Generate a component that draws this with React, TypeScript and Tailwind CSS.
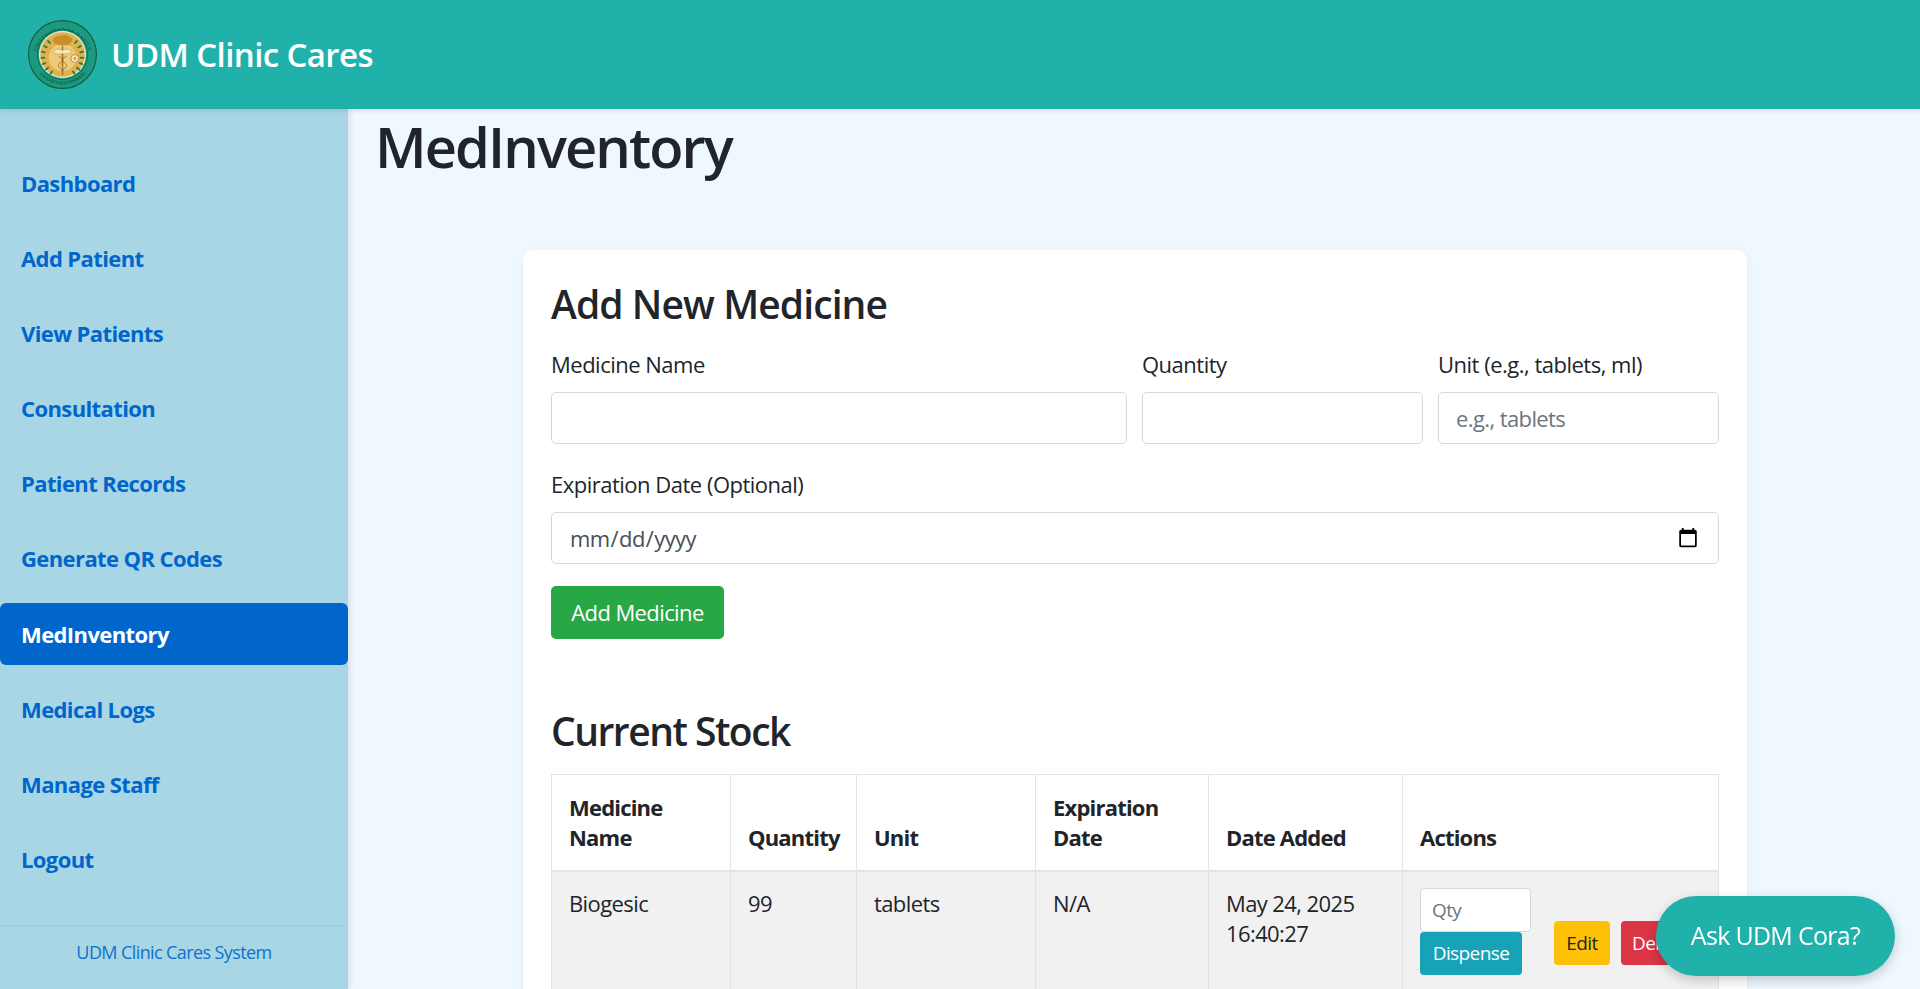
const navItems = [
  'Dashboard',
  'Add Patient',
  'View Patients',
  'Consultation',
  'Patient Records',
  'Generate QR Codes',
  'MedInventory',
  'Medical Logs',
  'Manage Staff',
  'Logout',
]

const inputClass =
  'h-[52px] w-full rounded-[5px] border border-[#d3d8de] bg-white px-[17px] text-[22px] outline-none placeholder:text-[#6c757d]'
const labelClass = 'mb-[13px] block h-[30px] text-[22px] leading-[30px] tracking-[-0.5px]'
const cellClass = 'border border-[#e1e4e8] px-[17px] pt-[16px] align-top'

function ClinicSeal() {
  const leaves = [0, 1, 2, 3, 4, 5, 6]
  return (
    <svg viewBox="0 0 70 70" className="h-[69px] w-[69px] shrink-0">
      <circle cx="35" cy="35" r="34.4" fill="#1b9a80" stroke="#14603f" strokeWidth="1.2" />
      <circle cx="35" cy="35" r="25.4" fill="none" stroke="#14603f" strokeWidth="0.8" />
      <defs>
        <path id="sealTop" d="M7.5 37a27.6 27.6 0 0 1 55 0" />
        <path id="sealBottom" d="M4.6 35a30.4 30.4 0 0 0 60.8 0" />
      </defs>
      <text fontSize="5" fill="#0f4a34" fontFamily="'Liberation Serif',serif" letterSpacing="0.35">
        <textPath href="#sealTop" startOffset="50%" textAnchor="middle">UNIVERSIDAD DE MANILA</textPath>
      </text>
      <text fontSize="4.6" fill="#0f4a34" fontFamily="'Liberation Serif',serif">
        <textPath href="#sealBottom" startOffset="50%" textAnchor="middle">UNIVERSITY HEALTH SERVICES</textPath>
      </text>
      <circle cx="35" cy="35" r="24" fill="#d9e8c9" />
      <circle cx="35" cy="35" r="22.6" fill="#e3b04e" />
      <circle cx="35" cy="38" r="14" fill="#efca7a" />
      {/* tree */}
      <path d="M25 21c2-5 6-6 9-5 3-2 7-1 9 2 3 0 3 4 0 5-1 3-5 3-7 2l-1 3-1-3c-3 1-7 0-9-4z" fill="#c98f2c" />
      {/* caduceus */}
      <path d="M35 27v29" stroke="#a8782c" strokeWidth="1.6" />
      <path d="M25 32c4-3 7-3 10-1 3-2 6-2 10 1-4 3-7 3-10 2-3 1-6 1-10-2z" fill="#f6e7bf" stroke="#b98a38" strokeWidth="0.5" />
      <path d="M31 37c5 2 5 4 4 5s-5 2-4 5 5 3 5 5M39 37c-5 2-5 4-4 5s5 2 4 5-5 3-5 5" fill="none" stroke="#8e6a2a" strokeWidth="0.8" />
      <circle cx="47.5" cy="39" r="4" fill="#f6e7bf" stroke="#a8782c" strokeWidth="0.8" />
      <circle cx="47.5" cy="39" r="1.6" fill="#d9a441" />
      {/* laurel */}
      {leaves.map((i) => {
        const a = ((i * 17 + 125) * Math.PI) / 180
        const b = ((55 - i * 17) * Math.PI) / 180
        const r = 20
        return (
          <g key={i} fill="#2f7a45">
            <ellipse cx={35 + r * Math.cos(a)} cy={37 + r * Math.sin(a)} rx="1" ry="2.6" transform={`rotate(${i * 17 + 35} ${35 + r * Math.cos(a)} ${37 + r * Math.sin(a)})`} />
            <ellipse cx={35 + r * Math.cos(b)} cy={37 + r * Math.sin(b)} rx="1" ry="2.6" transform={`rotate(${-(i * 17 + 35)} ${35 + r * Math.cos(b)} ${37 + r * Math.sin(b)})`} />
          </g>
        )
      })}
    </svg>
  )
}

function Field({ label, placeholder, className }: { label: string; placeholder?: string; className: string }) {
  return (
    <div className={className}>
      <label className={labelClass}>{label}</label>
      <input type="text" placeholder={placeholder} className={inputClass} />
    </div>
  )
}

export default function App() {
  return (
    <div className="flex h-[989px] flex-col overflow-hidden bg-[#f0f8ff] font-['Open_Sans',sans-serif] tracking-[-0.6px] text-[#212529]">
      <header className="relative z-10 flex h-[109px] shrink-0 items-center gap-[14px] bg-[#20b2aa] pl-[28px] shadow-[0_2px_4px_rgba(0,0,0,0.1)]">
        <ClinicSeal />
        <span className="text-[33px] font-semibold text-white">UDM Clinic Cares</span>
      </header>

      <div className="flex min-h-0 flex-1">
        <aside className="flex w-[348px] shrink-0 flex-col bg-[#a9d6e5] shadow-[2px_0_5px_rgba(0,0,0,0.1)]">
          <nav className="flex flex-1 flex-col gap-[13.2px] pt-[43px]">
            {navItems.map((item) => (
              <a
                key={item}
                href="#"
                className={`flex h-[62px] items-center rounded-[6px] px-[21px] text-[22px] font-bold tracking-[-0.6px] ${
                  item === 'MedInventory' ? 'bg-[#0066cc] text-white' : 'text-[#0066cc]'
                }`}
              >
                {item}
              </a>
            ))}
          </nav>
          <div className="flex h-[64px] items-center justify-center border-t border-[#9fcbdb] pb-[10px] text-[18px] text-[#0066cc] opacity-90">
            UDM Clinic Cares System
          </div>
        </aside>

        <main className="min-w-0 flex-1 overflow-hidden pr-[28px] pl-[27px]">
          <h1 className="h-[141px] text-[56px] leading-[74px] font-semibold tracking-[-1.9px]">MedInventory</h1>

          <div className="ml-[148px] w-[1224px] rounded-[10px] bg-white px-[28px] pt-[28px] shadow-[0_2px_8px_rgba(0,0,0,0.05)]">
            <h2 className="mb-[19px] text-[39px] leading-[52px] font-semibold tracking-[-0.9px]">Add New Medicine</h2>

            <div className="flex gap-[15px]">
              <Field label="Medicine Name" className="w-[576px]" />
              <Field label="Quantity" className="w-[281px]" />
              <Field label="Unit (e.g., tablets, ml)" placeholder="e.g., tablets" className="w-[281px]" />
            </div>

            <div className="mt-[25px]">
              <label className={labelClass}>Expiration Date (Optional)</label>
              <input type="date" className={`${inputClass} text-[#495057]`} />
            </div>

            <button className="mt-[22px] h-[53px] w-[173px] rounded-[5px] bg-[#28a745] text-[22px] text-white">
              Add Medicine
            </button>

            <h2 className="mt-[66px] mb-[17px] text-[39px] leading-[52px] font-semibold tracking-[-1.5px]">Current Stock</h2>

            <table className="w-[1167px] table-fixed border-collapse text-[22px] leading-[30px]">
              <colgroup>
                <col className="w-[179px]" />
                <col className="w-[126px]" />
                <col className="w-[179px]" />
                <col className="w-[173px]" />
                <col className="w-[194px]" />
                <col className="w-[316px]" />
              </colgroup>
              <thead>
                <tr>
                  {['Medicine Name', 'Quantity', 'Unit', 'Expiration Date', 'Date Added', 'Actions'].map((h) => (
                    <th key={h} className="h-[96px] border border-b-[2px] border-[#e1e4e8] px-[17px] pb-[18px] text-left align-bottom font-bold tracking-[-0.8px]">
                      {h}
                    </th>
                  ))}
                </tr>
              </thead>
              <tbody>
                <tr className="bg-[#f1f1f1]">
                  <td className={cellClass}>Biogesic</td>
                  <td className={cellClass}>99</td>
                  <td className={cellClass}>tablets</td>
                  <td className={cellClass}>N/A</td>
                  <td className={cellClass}>May 24, 2025 16:40:27</td>
                  <td className={`${cellClass} pb-[40px]`}>
                    <div className="flex items-end">
                      <div className="flex w-[111px] flex-col items-start">
                        <input
                          type="text"
                          placeholder="Qty"
                          className="h-[44px] w-[111px] rounded-[4px] border border-[#d3d8de] bg-white px-[11px] text-[19px] outline-none placeholder:text-[#6c757d]"
                        />
                        <button className="h-[43px] w-[102px] rounded-[4px] bg-[#17a2b8] text-[19px] text-white">Dispense</button>
                      </div>
                      <button className="mb-[10px] ml-[23px] h-[44px] w-[56px] rounded-[4px] bg-[#ffc107] text-[19px] text-[#212529]">Edit</button>
                      <button className="mb-[10px] ml-[11px] h-[44px] w-[76px] rounded-[4px] bg-[#dc3545] text-[19px] text-white">Delete</button>
                    </div>
                  </td>
                </tr>
              </tbody>
            </table>
          </div>
        </main>
      </div>

      <button className="fixed top-[896px] left-[1656px] h-[80px] w-[239px] rounded-full bg-[#20b2aa] text-[25px] tracking-[-0.7px] text-white shadow-[0_4px_12px_rgba(0,0,0,0.2)]">
        Ask UDM Cora?
      </button>
    </div>
  )
}
